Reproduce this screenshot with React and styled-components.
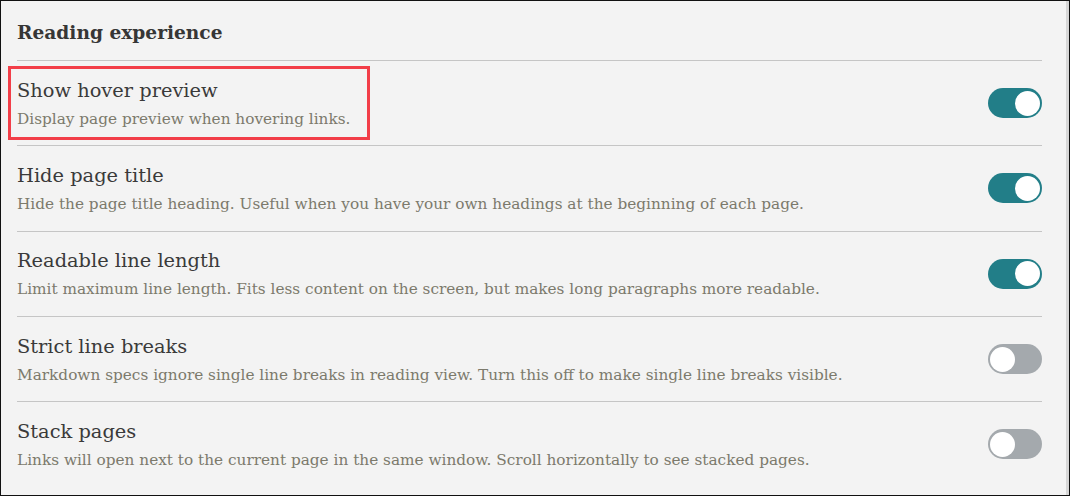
import styled, { createGlobalStyle } from "styled-components"

const Global = createGlobalStyle`
  html, body {
    margin: 0;
    padding: 0;
    background: #f3f3f3;
  }
  * {
    box-sizing: border-box;
  }
`

const Panel = styled.div`
  width: 1070px;
  height: 496px;
  background: #f3f3f3;
  border: 1px solid #111;
  border-right: 4px solid #d6d6d6;
  outline: 1px solid #111;
  outline-offset: -1px;
  padding: 0 24px 0 16px;
  font-family: "DejaVu Serif", "Liberation Serif", serif;
  overflow: hidden;
`

const Heading = styled.h2`
  margin: 0;
  height: 60px;
  display: flex;
  align-items: center;
  font-size: 18.6px;
  font-weight: bold;
  color: #363636;
  border-bottom: 1px solid #c5c5c5;
  padding-top: 4px;
`

const Row = styled.div`
  display: flex;
  align-items: center;
  justify-content: space-between;
  height: 85.3px;
  border-bottom: 1px solid ${({ $last }) => ($last ? "transparent" : "#c5c5c5")};
`

const Info = styled.div`
  position: relative;
  display: flex;
  flex-direction: column;
  gap: 8px;
  ${({ $highlight }) =>
    $highlight &&
    `
    &::after {
      content: "";
      position: absolute;
      left: -9px;
      right: -20px;
      top: -13px;
      bottom: -12px;
      border: 3px solid #f23e48;
    }
  `}
`

const Name = styled.div`
  font-size: 19.4px;
  color: #3a3a3a;
`

const Desc = styled.div`
  font-size: 15.3px;
  color: #7c7a6c;
`

const Toggle = styled.div`
  width: 54px;
  height: 30px;
  border-radius: 15px;
  background: ${({ $on }) => ($on ? "#227e88" : "#a4a9ad")};
  display: flex;
  align-items: center;
  justify-content: ${({ $on }) => ($on ? "flex-end" : "flex-start")};
  padding: 0 2px;
  flex-shrink: 0;
  &::before {
    content: "";
    width: 25px;
    height: 25px;
    border-radius: 50%;
    background: #fff;
  }
`

const settings = [
  {
    name: "Show hover preview",
    desc: "Display page preview when hovering links.",
    on: true,
    highlight: true,
  },
  {
    name: "Hide page title",
    desc: "Hide the page title heading. Useful when you have your own headings at the beginning of each page.",
    on: true,
  },
  {
    name: "Readable line length",
    desc: "Limit maximum line length. Fits less content on the screen, but makes long paragraphs more readable.",
    on: true,
  },
  {
    name: "Strict line breaks",
    desc: "Markdown specs ignore single line breaks in reading view. Turn this off to make single line breaks visible.",
    on: false,
  },
  {
    name: "Stack pages",
    desc: "Links will open next to the current page in the same window. Scroll horizontally to see stacked pages.",
    on: false,
  },
]

export default function App() {
  return (
    <>
      <Global />
      <Panel>
        <Heading>Reading experience</Heading>
        {settings.map((s, i) => (
          <Row key={s.name} $last={i === settings.length - 1}>
            <Info $highlight={s.highlight}>
              <Name>{s.name}</Name>
              <Desc>{s.desc}</Desc>
            </Info>
            <Toggle $on={s.on} />
          </Row>
        ))}
      </Panel>
    </>
  )
}
